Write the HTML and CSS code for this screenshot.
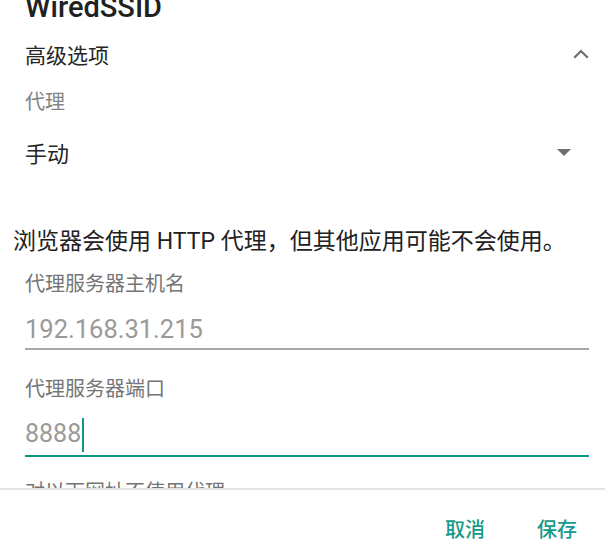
FILE: index.html
```html
<!DOCTYPE html>
<html lang="zh-CN">
<head>
<meta charset="utf-8">
<title>WiredSSID</title>
<link rel="stylesheet" href="styles.css">
</head>
<body>
<div class="dialog">
  <div class="content">
    <div class="title">WiredSSID</div>
    <div class="row advanced">
      <span>高级选项</span>
      <svg class="chev" width="16" height="10" viewBox="0 0 16 10"><polyline points="1.2,8.8 8,2 14.8,8.8" fill="none" stroke="#6e6e6e" stroke-width="2.2"/></svg>
    </div>
    <div class="proxy-label">代理</div>
    <div class="row spinner">
      <span>手动</span>
      <svg class="tri" width="14" height="7" viewBox="0 0 14 7"><polygon points="0,0 14,0 7,7" fill="#6e6e6e"/></svg>
    </div>
    <p class="warning">浏览器会使用 HTTP 代理，但其他应用可能不会使用。</p>
    <div class="field host">
      <div class="label">代理服务器主机名</div>
      <div class="input">192.168.31.215</div>
    </div>
    <div class="field port">
      <div class="label">代理服务器端口</div>
      <div class="input focused">8888<span class="cursor"></span></div>
    </div>
    <div class="field bypass">
      <div class="label">对以下网址不使用代理</div>
    </div>
  </div>
  <div class="footer">
    <button class="btn">取消</button>
    <button class="btn">保存</button>
  </div>
</div>
</body>
</html>
```
FILE: styles.css
```css
html, body {
  margin: 0;
  padding: 0;
  background: #ffffff;
}
body {
  font-family: Roboto, "Noto Sans CJK SC", sans-serif;
  color: #212121;
}
.dialog {
  width: 605px;
  height: 549px;
  display: flex;
  flex-direction: column;
  overflow: hidden;
}
.content {
  flex: none;
  height: 488px;
  overflow: hidden;
  padding: 0 16px 0 25px;
  box-sizing: border-box;
}
.title {
  margin-top: -9px;
  height: 32px;
  line-height: 32px;
  font-size: 29px;
  font-weight: 500;
  color: #212121;
}
.row {
  display: flex;
  align-items: center;
  justify-content: space-between;
}
.advanced {
  height: 61px;
  font-size: 21px;
  color: #262626;
}
.proxy-label {
  height: 36px;
  line-height: 36px;
  font-size: 20px;
  color: #858585;
}
.spinner {
  height: 64px;
  font-size: 22px;
  padding-right: 18px;
  color: #262626;
}
.warning {
  margin: 40px 0 0 -12px;
  height: 36px;
  line-height: 36px;
  font-size: 23px;
  white-space: nowrap;
  color: #212121;
}
.field .label {
  height: 36px;
  line-height: 36px;
  font-size: 20px;
  color: #757575;
}
.field .input {
  margin-top: 9px;
  height: 36px;
  line-height: 36px;
  font-size: 25.5px;
  color: #9a9a9a;
  padding-bottom: 1px;
  border-bottom: 2px solid #a8a8a8;
}
.field .input.focused {
  font-size: 25px;
  padding-bottom: 3px;
  border-bottom-color: #0f9887;
}
.host {
  margin-top: 6px;
}
.port {
  margin-top: 21px;
}
.bypass {
  margin-top: 17px;
}
.cursor {
  display: inline-block;
  width: 2px;
  height: 34px;
  margin-left: 1px;
  vertical-align: middle;
  background: #0f9887;
}
.footer {
  flex: 1;
  border-top: 2px solid #e4e4e4;
  display: flex;
  justify-content: flex-end;
  gap: 52px;
  padding: 22px 28px 0 0;
}
.btn {
  border: none;
  background: none;
  padding: 0;
  margin: 0;
  font-family: Roboto, "Noto Sans CJK SC", sans-serif;
  font-size: 20px;
  font-weight: 500;
  line-height: 36px;
  height: 36px;
  color: #149a8a;
}
```
